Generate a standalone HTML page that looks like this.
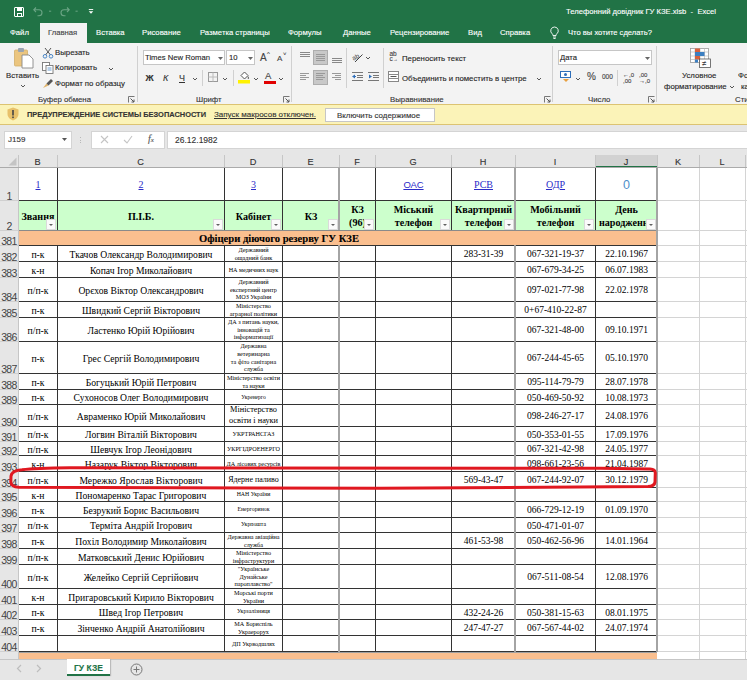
<!DOCTYPE html><html><head><meta charset="utf-8"><style>
*{margin:0;padding:0;box-sizing:border-box}
html,body{width:747px;height:680px;overflow:hidden;background:#E6E6E6;font-family:'Liberation Sans', sans-serif;}
.ab{position:absolute}
.t{position:absolute;white-space:nowrap;line-height:1;-webkit-text-stroke:0.12px currentColor}
.rib{color:#262626;font-size:7.8px}
.cell{position:absolute;font-family:'Liberation Serif', serif;color:#000;white-space:nowrap;line-height:1;text-align:center}
.hl{position:absolute;background:#333}
.gl{position:absolute;background:#D4D4D4}
.rn{position:absolute;left:0;width:18px;text-align:center;font-size:10.5px;color:#444;line-height:1;letter-spacing:-0.6px}
.ch{position:absolute;top:154px;font-size:11px;color:#333;line-height:1;text-align:center}
.fb{position:absolute;width:10px;height:11px;background:#FAFAFA;border:1px solid #DADADA}
.fb:after{content:'';position:absolute;left:2px;top:4px;border-left:2.5px solid transparent;border-right:2.5px solid transparent;border-top:2.5px solid #606060}
</style></head><body>
<div class="ab" style="left:0;top:0;width:747px;height:43px;background:#217346"></div>
<div class="ab" style="left:14px;top:7px;width:10px;height:10px;border:1.5px solid #fff;border-radius:1px"></div>
<div class="ab" style="left:16.5px;top:7px;width:5px;height:3.5px;background:#fff"></div>
<div class="ab" style="left:16.5px;top:13px;width:5px;height:3px;border:1px solid #fff;border-bottom:none"></div>
<svg class="ab" style="left:32px;top:5px" width="50" height="12" viewBox="0 0 50 12"><path d="M4 2.5 L1.8 4.8 L4 7 M1.8 4.8 H7 a3 3 0 0 1 0 6 H5.5" fill="none" stroke="#6BA585" stroke-width="1.1"/><path d="M17 6.2 h2.2" stroke="#6BA585" stroke-width="1"/><path d="M35 2.5 L37.2 4.8 L35 7 M37.2 4.8 H32 a3 3 0 0 0 0 6 H33.5" fill="none" stroke="#6BA585" stroke-width="1.1"/><path d="M43.5 6.2 h2.2" stroke="#6BA585" stroke-width="1"/></svg>
<svg class="ab" style="left:88px;top:9px" width="6" height="6" viewBox="0 0 6 6"><path d="M0.8 0.5 h4.4" stroke="#fff" stroke-width="0.9"/><path d="M0.8 2.3 L3 4.8 L5.2 2.3 Z" fill="#fff"/></svg>
<div class="t" style="left:566px;top:8px;font-size:7.65px;color:#fff">Телефонний довідник ГУ КЗЕ.xlsb&nbsp; -&nbsp; Excel</div>
<div class="ab" style="left:40px;top:23px;width:47px;height:21px;background:#F3F3F3"></div>
<div class="t" style="left:10px;top:29px;font-size:7.7px;color:#fff">Файл</div>
<div class="t" style="left:48px;top:29px;font-size:7.7px;color:#444">Главная</div>
<div class="t" style="left:96px;top:29px;font-size:7.7px;color:#fff">Вставка</div>
<div class="t" style="left:142px;top:29px;font-size:7.7px;color:#fff">Рисование</div>
<div class="t" style="left:200px;top:29px;font-size:7.7px;color:#fff">Разметка страницы</div>
<div class="t" style="left:288px;top:29px;font-size:7.7px;color:#fff">Формулы</div>
<div class="t" style="left:343px;top:29px;font-size:7.7px;color:#fff">Данные</div>
<div class="t" style="left:390px;top:29px;font-size:7.7px;color:#fff">Рецензирование</div>
<div class="t" style="left:468px;top:29px;font-size:7.7px;color:#fff">Вид</div>
<div class="t" style="left:500px;top:29px;font-size:7.7px;color:#fff">Справка</div>
<svg class="ab" style="left:549px;top:26px" width="11" height="14" viewBox="0 0 11 14"><path d="M5.5 1 a3.8 3.8 0 0 0 -2.3 6.8 c0.5 0.45 0.7 1 0.7 1.7 h3.2 c0 -0.7 0.2 -1.25 0.7 -1.7 A3.8 3.8 0 0 0 5.5 1 Z M4 11 h3 M4.4 12.5 h2.2" fill="none" stroke="#fff" stroke-width="0.9"/></svg>
<div class="t" style="left:568px;top:29px;font-size:7.6px;color:#fff">Что вы хотите сделать?</div>
<div class="ab" style="left:0;top:43px;width:747px;height:61px;background:#F3F3F3"></div>
<svg class="ab" style="left:13px;top:47px" width="22" height="22" viewBox="0 0 22 22"><rect x="1.5" y="3" width="13" height="16" rx="1" fill="#EBC57F" stroke="#D2AE6A" stroke-width="0.8"/><rect x="5" y="1" width="6" height="4" rx="1" fill="#9AA4B0"/><path d="M9 8 h7 l4 4 v9 h-11 z" fill="#fff" stroke="#888" stroke-width="0.9"/></svg>
<div class="t rib" style="left:6px;top:72px">Вставить</div>
<svg class="ab" style="left:20px;top:83.5px" width="6" height="4" viewBox="0 0 6 4"><path d="M1 1 L3 3 L5 1" fill="none" stroke="#555" stroke-width="1"/></svg>
<svg class="ab" style="left:42px;top:47px" width="12" height="12" viewBox="0 0 12 12"><path d="M3 1 L8.5 8 M9 1 L3.5 8" stroke="#555" stroke-width="1"/><circle cx="3" cy="9.3" r="1.8" fill="none" stroke="#4A86C5" stroke-width="1"/><circle cx="9" cy="9.3" r="1.8" fill="none" stroke="#4A86C5" stroke-width="1"/></svg>
<div class="t rib" style="left:55px;top:49px">Вырезать</div>
<svg class="ab" style="left:42px;top:62px" width="12" height="12" viewBox="0 0 12 12"><rect x="0.5" y="0.5" width="7" height="8" fill="#fff" stroke="#777" stroke-width="0.9"/><rect x="4" y="3.5" width="7" height="8" fill="#fff" stroke="#777" stroke-width="0.9"/><path d="M5.5 6 h4 M5.5 8 h4" stroke="#4A86C5" stroke-width="0.8"/></svg>
<div class="t rib" style="left:55px;top:64px">Копировать</div>
<svg class="ab" style="left:108px;top:67px" width="6" height="4" viewBox="0 0 6 4"><path d="M1 1 L3 3 L5 1" fill="none" stroke="#555" stroke-width="1"/></svg>
<svg class="ab" style="left:42px;top:76.5px" width="12" height="12" viewBox="0 0 12 12"><path d="M1 11 L4.5 6.5 L6.5 8.5 Z" fill="#E0B36A"/><path d="M4.5 6.5 L9 2 L11 4 L6.5 8.5 Z" fill="#555"/></svg>
<div class="t rib" style="left:55px;top:80px">Формат по образцу</div>
<div class="t rib" style="left:38px;top:95.5px;color:#333">Буфер обмена</div>
<svg class="ab" style="left:128px;top:96px" width="7" height="7" viewBox="0 0 7 7"><path d="M0.5 6.5 V0.5 H6.5" fill="none" stroke="#777" stroke-width="1"/><path d="M2.5 2.5 L6 6 M6 3.5 V6 H3.5" fill="none" stroke="#555" stroke-width="1"/></svg>
<div class="ab" style="left:137px;top:46px;width:1px;height:56px;background:#D0D0D0"></div>
<div class="ab" style="left:143px;top:50px;width:82px;height:15px;background:#fff;border:1px solid #C6C6C6"></div>
<div class="t rib" style="left:145px;top:53.5px;font-size:7.7px">Times New Roman</div>
<svg class="ab" style="left:218px;top:57px" width="5" height="3"><path d="M0 0 h5 l-2.5 3z" fill="#666"/></svg>
<div class="ab" style="left:226px;top:50px;width:29px;height:15px;background:#fff;border:1px solid #C6C6C6"></div>
<div class="t rib" style="left:229px;top:53.5px;font-size:7.7px">10</div>
<svg class="ab" style="left:248px;top:57px" width="5" height="3"><path d="M0 0 h5 l-2.5 3z" fill="#666"/></svg>
<div class="t" style="left:260px;top:53px;font-size:10px;color:#444">A</div><div class="t" style="left:267px;top:51px;font-size:6px;color:#444">^</div>
<div class="t" style="left:277px;top:55px;font-size:8px;color:#444">A</div><div class="t" style="left:283px;top:51px;font-size:6px;color:#444">˅</div>
<div class="t" style="left:145.5px;top:74px;font-size:9px;font-weight:bold;color:#333">Ж</div>
<div class="t" style="left:163px;top:74px;font-size:9px;font-style:italic;color:#333">К</div>
<div class="t" style="left:179px;top:74px;font-size:9px;color:#333;text-decoration:underline">Ч</div>
<svg class="ab" style="left:192px;top:77px" width="6" height="4" viewBox="0 0 6 4"><path d="M1 1 L3 3 L5 1" fill="none" stroke="#555" stroke-width="1"/></svg>
<div class="ab" style="left:202px;top:70px;width:1px;height:16px;background:#D0D0D0"></div>
<svg class="ab" style="left:208px;top:72px" width="10" height="10" viewBox="0 0 10 10"><rect x="0.5" y="0.5" width="9" height="9" fill="none" stroke="#999" stroke-width="1"/><path d="M5 0.5 V9.5 M0.5 5 H9.5" stroke="#BBB" stroke-width="1"/></svg>
<svg class="ab" style="left:222px;top:77px" width="6" height="4" viewBox="0 0 6 4"><path d="M1 1 L3 3 L5 1" fill="none" stroke="#555" stroke-width="1"/></svg>
<div class="ab" style="left:233px;top:70px;width:1px;height:16px;background:#D0D0D0"></div>
<svg class="ab" style="left:238px;top:70px" width="12" height="14" viewBox="0 0 12 14"><path d="M3 5.5 L6.5 2 L10 5.5 L6.5 9 Z" fill="#fff" stroke="#555" stroke-width="1"/><path d="M10 6.5 q1 2 0 2.5" fill="none" stroke="#555"/><rect x="0" y="10" width="12" height="3.5" fill="#FFF200"/></svg>
<svg class="ab" style="left:253px;top:77px" width="6" height="4" viewBox="0 0 6 4"><path d="M1 1 L3 3 L5 1" fill="none" stroke="#555" stroke-width="1"/></svg>
<div class="t" style="left:265px;top:71px;font-size:9.5px;color:#444">A</div>
<div class="ab" style="left:263.5px;top:80.5px;width:12px;height:3px;background:#E00000"></div>
<svg class="ab" style="left:278px;top:77px" width="6" height="4" viewBox="0 0 6 4"><path d="M1 1 L3 3 L5 1" fill="none" stroke="#555" stroke-width="1"/></svg>
<div class="t rib" style="left:196px;top:95.5px;color:#333">Шрифт</div>
<svg class="ab" style="left:283px;top:96px" width="7" height="7" viewBox="0 0 7 7"><path d="M0.5 6.5 V0.5 H6.5" fill="none" stroke="#777" stroke-width="1"/><path d="M2.5 2.5 L6 6 M6 3.5 V6 H3.5" fill="none" stroke="#555" stroke-width="1"/></svg>
<div class="ab" style="left:291px;top:46px;width:1px;height:56px;background:#D0D0D0"></div>
<div class="ab" style="left:300px;top:52px;width:10px;height:1px;background:#888"></div><div class="ab" style="left:300px;top:54px;width:10px;height:1px;background:#888"></div><div class="ab" style="left:300px;top:56px;width:10px;height:1px;background:#888"></div>
<div class="ab" style="left:313px;top:50px;width:15px;height:15px;background:#C8C8C8;border:1px solid #ADADAD"></div>
<div class="ab" style="left:316px;top:54px;width:9px;height:1px;background:#999"></div><div class="ab" style="left:316px;top:56px;width:9px;height:1px;background:#999"></div><div class="ab" style="left:316px;top:58px;width:9px;height:1px;background:#999"></div><div class="ab" style="left:316px;top:60px;width:9px;height:1px;background:#999"></div>
<div class="ab" style="left:332px;top:58px;width:10px;height:1px;background:#888"></div><div class="ab" style="left:332px;top:60px;width:10px;height:1px;background:#888"></div><div class="ab" style="left:332px;top:62px;width:10px;height:1px;background:#888"></div>
<div class="ab" style="left:300px;top:73px;width:9px;height:1px;background:#999"></div><div class="ab" style="left:300px;top:75px;width:6px;height:1px;background:#999"></div><div class="ab" style="left:300px;top:77px;width:9px;height:1px;background:#999"></div><div class="ab" style="left:300px;top:79px;width:6px;height:1px;background:#999"></div>
<div class="ab" style="left:313px;top:70px;width:15px;height:15px;background:#C8C8C8;border:1px solid #ADADAD"></div>
<div class="ab" style="left:316px;top:73px;width:9px;height:1px;background:#999"></div><div class="ab" style="left:316px;top:75px;width:7px;height:1px;background:#999"></div><div class="ab" style="left:316px;top:77px;width:9px;height:1px;background:#999"></div><div class="ab" style="left:316px;top:79px;width:7px;height:1px;background:#999"></div>
<div class="ab" style="left:332px;top:73px;width:9px;height:1px;background:#999"></div><div class="ab" style="left:335px;top:75px;width:6px;height:1px;background:#999"></div><div class="ab" style="left:332px;top:77px;width:9px;height:1px;background:#999"></div><div class="ab" style="left:335px;top:79px;width:6px;height:1px;background:#999"></div>
<div class="ab" style="left:346px;top:48px;width:1px;height:40px;background:#D0D0D0"></div>
<svg class="ab" style="left:352px;top:51px" width="12" height="12" viewBox="0 0 12 12"><text x="0" y="8" font-size="6.5" fill="#444" font-family="Liberation Sans" transform="rotate(-30 4 6)">ab</text><path d="M3 11 L10.5 3.5" stroke="#444" stroke-width="1"/></svg>
<svg class="ab" style="left:365px;top:56px" width="6" height="4" viewBox="0 0 6 4"><path d="M1 1 L3 3 L5 1" fill="none" stroke="#555" stroke-width="1"/></svg>
<svg class="ab" style="left:352px;top:72px" width="11" height="10" viewBox="0 0 11 10"><path d="M0 0.5h11 M5 3.5h6 M5 5.5h6 M0 8.5h11" stroke="#777" stroke-width="1"/><path d="M0 4.5 L3 2.5 V6.5Z" fill="#2F6FBA"/><path d="M1 4.5h3" stroke="#2F6FBA"/></svg>
<svg class="ab" style="left:368px;top:72px" width="11" height="10" viewBox="0 0 11 10"><path d="M0 0.5h11 M5 3.5h6 M5 5.5h6 M0 8.5h11" stroke="#777" stroke-width="1"/><path d="M4 4.5 L1 2.5 V6.5Z" fill="#2F6FBA"/></svg>
<div class="ab" style="left:383px;top:48px;width:1px;height:40px;background:#D0D0D0"></div>
<div class="t" style="left:389.5px;top:52px;font-size:6.5px;color:#444;line-height:0.75">ab<br>c<span style="font-size:5px">→</span></div>
<div class="t rib" style="left:402px;top:54.5px">Переносить текст</div>
<svg class="ab" style="left:388px;top:71px" width="11" height="11" viewBox="0 0 11 11"><rect x="0.5" y="0.5" width="10" height="10" fill="#fff" stroke="#888"/><path d="M0.5 3.5h10 M0.5 7.5h10" stroke="#888"/><path d="M2.5 5.5h6" stroke="#555"/></svg>
<div class="t rib" style="left:402px;top:74.5px">Объединить и поместить в центре</div>
<svg class="ab" style="left:536px;top:77px" width="6" height="4" viewBox="0 0 6 4"><path d="M1 1 L3 3 L5 1" fill="none" stroke="#555" stroke-width="1"/></svg>
<div class="t rib" style="left:390px;top:95.5px;color:#333">Выравнивание</div>
<svg class="ab" style="left:544px;top:96px" width="7" height="7" viewBox="0 0 7 7"><path d="M0.5 6.5 V0.5 H6.5" fill="none" stroke="#777" stroke-width="1"/><path d="M2.5 2.5 L6 6 M6 3.5 V6 H3.5" fill="none" stroke="#555" stroke-width="1"/></svg>
<div class="ab" style="left:552px;top:46px;width:1px;height:56px;background:#D0D0D0"></div>
<div class="ab" style="left:558px;top:50px;width:94px;height:15px;background:#fff;border:1px solid #C6C6C6"></div>
<div class="t rib" style="left:560px;top:53.5px;font-size:7.7px">Дата</div>
<svg class="ab" style="left:645px;top:57px" width="5" height="3"><path d="M0 0 h5 l-2.5 3z" fill="#666"/></svg>
<svg class="ab" style="left:560px;top:71px" width="12" height="12" viewBox="0 0 12 12"><rect x="0.5" y="0.5" width="10" height="6" fill="#fff" stroke="#2F6FBA"/><circle cx="5.5" cy="3.5" r="1.5" fill="#2F6FBA"/><path d="M3 8 l3 3 l3 -3" fill="#E8A040"/></svg>
<svg class="ab" style="left:575px;top:77px" width="6" height="4" viewBox="0 0 6 4"><path d="M1 1 L3 3 L5 1" fill="none" stroke="#555" stroke-width="1"/></svg>
<div class="t" style="left:587px;top:72px;font-size:10px;color:#444">%</div>
<div class="t" style="left:602px;top:74px;font-size:6.5px;color:#444">000</div>
<div class="ab" style="left:617px;top:70px;width:1px;height:16px;background:#D0D0D0"></div>
<div class="t" style="left:623px;top:71.5px;font-size:6px;color:#444;line-height:1">←,0<br>,00</div>
<div class="t" style="left:639px;top:71.5px;font-size:6px;color:#444;line-height:1">,00<br>→,0</div>
<div class="t rib" style="left:588px;top:95.5px;color:#333">Число</div>
<svg class="ab" style="left:648px;top:96px" width="7" height="7" viewBox="0 0 7 7"><path d="M0.5 6.5 V0.5 H6.5" fill="none" stroke="#777" stroke-width="1"/><path d="M2.5 2.5 L6 6 M6 3.5 V6 H3.5" fill="none" stroke="#555" stroke-width="1"/></svg>
<div class="ab" style="left:656px;top:46px;width:1px;height:56px;background:#D0D0D0"></div>
<svg class="ab" style="left:690px;top:48px" width="21" height="20" viewBox="0 0 21 20"><rect x="0.5" y="0.5" width="18" height="14" fill="#fff" stroke="#999" stroke-width="0.8"/><path d="M0.5 4h18 M0.5 8h18 M0.5 11.5h18 M5 0.5v14 M10 0.5v14 M14.5 0.5v14" stroke="#BBB" stroke-width="0.7"/><rect x="5" y="0.5" width="5" height="3.5" fill="#D8613C"/><rect x="5" y="4" width="9.5" height="4" fill="#3C7FC1"/><rect x="5" y="8" width="5" height="3.5" fill="#D8613C"/><rect x="5" y="11.5" width="3" height="3" fill="#3C7FC1"/><rect x="9.5" y="11" width="11" height="8.5" fill="#fff" stroke="#555" stroke-width="0.8"/><text x="12" y="18" font-size="8" fill="#333" font-family="Liberation Sans">≠</text></svg>
<div class="t rib" style="left:682px;top:72px">Условное</div>
<div class="t rib" style="left:664px;top:83px">форматирование</div>
<svg class="ab" style="left:729px;top:85px" width="6" height="4" viewBox="0 0 6 4"><path d="M1 1 L3 3 L5 1" fill="none" stroke="#555" stroke-width="1"/></svg>
<div class="t rib" style="left:738px;top:72px">Фо</div>
<div class="t rib" style="left:741px;top:83px">ка</div>
<div class="t rib" style="left:735px;top:95.5px;color:#333">Сти</div>
<div class="ab" style="left:0;top:104px;width:747px;height:21px;background:#FBF3B8;border-top:1px solid #DCC372;border-bottom:1px solid #DCC372"></div>
<svg class="ab" style="left:7px;top:107px" width="12" height="14" viewBox="0 0 12 14"><path d="M6 0.5 L11.5 2.5 V7 C11.5 10.5 8.5 12.5 6 13.5 C3.5 12.5 0.5 10.5 0.5 7 V2.5 Z" fill="#E8C16A"/><rect x="5.2" y="3" width="1.6" height="5.5" fill="#444"/><rect x="5.2" y="9.5" width="1.6" height="1.6" fill="#444"/></svg>
<div class="t" style="left:27px;top:111px;font-size:7.45px;font-weight:bold;color:#333">ПРЕДУПРЕЖДЕНИЕ СИСТЕМЫ БЕЗОПАСНОСТИ</div>
<div class="t" style="left:214px;top:111px;font-size:8px;color:#333;text-decoration:underline">Запуск макросов отключен.</div>
<div class="ab" style="left:325px;top:108px;width:110px;height:14px;background:#fff;border:1px solid #C6C6C6"></div>
<div class="t" style="left:337px;top:111.5px;font-size:7.9px;color:#333">Включить содержимое</div>
<div class="ab" style="left:0;top:125px;width:747px;height:43px;background:#E6E6E6"></div>
<div class="ab" style="left:4px;top:131px;width:68px;height:18px;background:#fff;border:1px solid #D4D4D4"></div>
<div class="t" style="left:8px;top:136px;font-size:8px;color:#333">J159</div>
<svg class="ab" style="left:62px;top:138px" width="5" height="3"><path d="M0 0 h5 l-2.5 3z" fill="#555"/></svg>
<div class="ab" style="left:80px;top:137px;width:1.2px;height:1.2px;background:#B8B8B8"></div><div class="ab" style="left:80px;top:139.5px;width:1.2px;height:1.2px;background:#B8B8B8"></div><div class="ab" style="left:80px;top:142px;width:1.2px;height:1.2px;background:#B8B8B8"></div>
<div class="ab" style="left:91px;top:131px;width:74px;height:18px;background:#fff;border:1px solid #D4D4D4"></div>
<svg class="ab" style="left:100px;top:135px" width="9" height="9" viewBox="0 0 9 9"><path d="M1 1 L8 8 M8 1 L1 8" stroke="#C4C4C4" stroke-width="1.1"/></svg>
<svg class="ab" style="left:123px;top:135px" width="10" height="9" viewBox="0 0 10 9"><path d="M1 5 L4 8 L9 1" fill="none" stroke="#C4C4C4" stroke-width="1.1"/></svg>
<div class="t" style="left:148px;top:133.5px;font-size:10px;font-style:italic;color:#555;font-family:'Liberation Serif'">f<span style="font-size:7px">x</span></div>
<div class="ab" style="left:167px;top:131px;width:580px;height:18px;background:#fff;border:1px solid #D4D4D4;border-right:none"></div>
<div class="t" style="left:175px;top:136px;font-size:8.5px;color:#333">26.12.1982</div>
<div class="ab" style="left:0;top:149px;width:747px;height:1px;background:#DADADA"></div>
<div class="ab" style="left:0;top:149px;width:747px;height:18px;background:#E6E6E6"></div>
<div class="ab" style="left:595px;top:155px;width:62px;height:12px;background:#D2D2D2"></div>
<div class="ab" style="left:595px;top:166px;width:62px;height:2px;background:#217346"></div>
<div class="ab" style="left:0;top:167px;width:747px;height:1px;background:#ABABAB"></div>
<svg class="ab" style="left:8px;top:157px" width="9" height="9"><path d="M8.5 0.5 V8.5 H0.5 Z" fill="#C4C4C4"/></svg>
<div class="t" style="left:18px;width:39px;top:157.5px;font-size:9.2px;text-align:center;color:#333">B</div>
<div class="ab" style="left:57px;top:155px;width:1px;height:12px;background:#C6C6C6"></div>
<div class="t" style="left:57px;width:167px;top:157.5px;font-size:9.2px;text-align:center;color:#333">C</div>
<div class="ab" style="left:224px;top:155px;width:1px;height:12px;background:#C6C6C6"></div>
<div class="t" style="left:224px;width:58px;top:157.5px;font-size:9.2px;text-align:center;color:#333">D</div>
<div class="ab" style="left:282px;top:155px;width:1px;height:12px;background:#C6C6C6"></div>
<div class="t" style="left:282px;width:57px;top:157.5px;font-size:9.2px;text-align:center;color:#333">E</div>
<div class="ab" style="left:339px;top:155px;width:1px;height:12px;background:#C6C6C6"></div>
<div class="t" style="left:339px;width:36px;top:157.5px;font-size:9.2px;text-align:center;color:#333">F</div>
<div class="ab" style="left:375px;top:155px;width:1px;height:12px;background:#C6C6C6"></div>
<div class="t" style="left:375px;width:76px;top:157.5px;font-size:9.2px;text-align:center;color:#333">G</div>
<div class="ab" style="left:451px;top:155px;width:1px;height:12px;background:#C6C6C6"></div>
<div class="t" style="left:451px;width:64px;top:157.5px;font-size:9.2px;text-align:center;color:#333">H</div>
<div class="ab" style="left:515px;top:155px;width:1px;height:12px;background:#C6C6C6"></div>
<div class="t" style="left:515px;width:80px;top:157.5px;font-size:9.2px;text-align:center;color:#333">I</div>
<div class="ab" style="left:595px;top:155px;width:1px;height:12px;background:#C6C6C6"></div>
<div class="t" style="left:595px;width:62px;top:157.5px;font-size:9.2px;text-align:center;color:#333">J</div>
<div class="ab" style="left:657px;top:155px;width:1px;height:12px;background:#C6C6C6"></div>
<div class="t" style="left:657px;width:42px;top:157.5px;font-size:9.2px;text-align:center;color:#333">K</div>
<div class="ab" style="left:699px;top:155px;width:1px;height:12px;background:#C6C6C6"></div>
<div class="t" style="left:699px;width:46px;top:157.5px;font-size:9.2px;text-align:center;color:#333">L</div>
<div class="ab" style="left:745px;top:155px;width:1px;height:12px;background:#C6C6C6"></div>
<div class="ab" style="left:18px;top:155px;width:1px;height:12px;background:#C6C6C6"></div>
<div class="ab" style="left:0;top:168px;width:18px;height:491px;background:#E6E6E6"></div>
<div class="ab" style="left:18px;top:168px;width:1px;height:491px;background:#C6C6C6"></div>
<div class="ab" style="left:19px;top:168px;width:728px;height:491px;background:#fff"></div>
<div class="ab" style="left:19px;top:201px;width:638px;height:30px;background:#CCFFCC"></div>
<div class="ab" style="left:19px;top:231px;width:638px;height:15px;background:#FABF8F"></div>
<div class="ab" style="left:19px;top:652px;width:638px;height:7px;background:#FABF8F"></div>
<div class="gl" style="left:657px;top:200px;width:90px;height:1px"></div>
<div class="gl" style="left:0px;top:200px;width:18px;height:1px;background:#D0D0D0"></div>
<div class="gl" style="left:657px;top:230px;width:90px;height:1px"></div>
<div class="gl" style="left:0px;top:230px;width:18px;height:1px;background:#D0D0D0"></div>
<div class="gl" style="left:657px;top:245px;width:90px;height:1px"></div>
<div class="gl" style="left:0px;top:245px;width:18px;height:1px;background:#D0D0D0"></div>
<div class="gl" style="left:657px;top:261px;width:90px;height:1px"></div>
<div class="gl" style="left:0px;top:261px;width:18px;height:1px;background:#D0D0D0"></div>
<div class="gl" style="left:657px;top:277px;width:90px;height:1px"></div>
<div class="gl" style="left:0px;top:277px;width:18px;height:1px;background:#D0D0D0"></div>
<div class="gl" style="left:657px;top:301px;width:90px;height:1px"></div>
<div class="gl" style="left:0px;top:301px;width:18px;height:1px;background:#D0D0D0"></div>
<div class="gl" style="left:657px;top:317px;width:90px;height:1px"></div>
<div class="gl" style="left:0px;top:317px;width:18px;height:1px;background:#D0D0D0"></div>
<div class="gl" style="left:657px;top:341px;width:90px;height:1px"></div>
<div class="gl" style="left:0px;top:341px;width:18px;height:1px;background:#D0D0D0"></div>
<div class="gl" style="left:657px;top:373px;width:90px;height:1px"></div>
<div class="gl" style="left:0px;top:373px;width:18px;height:1px;background:#D0D0D0"></div>
<div class="gl" style="left:657px;top:389px;width:90px;height:1px"></div>
<div class="gl" style="left:0px;top:389px;width:18px;height:1px;background:#D0D0D0"></div>
<div class="gl" style="left:657px;top:404px;width:90px;height:1px"></div>
<div class="gl" style="left:0px;top:404px;width:18px;height:1px;background:#D0D0D0"></div>
<div class="gl" style="left:657px;top:426px;width:90px;height:1px"></div>
<div class="gl" style="left:0px;top:426px;width:18px;height:1px;background:#D0D0D0"></div>
<div class="gl" style="left:657px;top:441px;width:90px;height:1px"></div>
<div class="gl" style="left:0px;top:441px;width:18px;height:1px;background:#D0D0D0"></div>
<div class="gl" style="left:657px;top:455px;width:90px;height:1px"></div>
<div class="gl" style="left:0px;top:455px;width:18px;height:1px;background:#D0D0D0"></div>
<div class="gl" style="left:657px;top:471px;width:90px;height:1px"></div>
<div class="gl" style="left:0px;top:471px;width:18px;height:1px;background:#D0D0D0"></div>
<div class="gl" style="left:657px;top:487px;width:90px;height:1px"></div>
<div class="gl" style="left:0px;top:487px;width:18px;height:1px;background:#D0D0D0"></div>
<div class="gl" style="left:657px;top:501px;width:90px;height:1px"></div>
<div class="gl" style="left:0px;top:501px;width:18px;height:1px;background:#D0D0D0"></div>
<div class="gl" style="left:657px;top:517px;width:90px;height:1px"></div>
<div class="gl" style="left:0px;top:517px;width:18px;height:1px;background:#D0D0D0"></div>
<div class="gl" style="left:657px;top:532px;width:90px;height:1px"></div>
<div class="gl" style="left:0px;top:532px;width:18px;height:1px;background:#D0D0D0"></div>
<div class="gl" style="left:657px;top:548px;width:90px;height:1px"></div>
<div class="gl" style="left:0px;top:548px;width:18px;height:1px;background:#D0D0D0"></div>
<div class="gl" style="left:657px;top:564px;width:90px;height:1px"></div>
<div class="gl" style="left:0px;top:564px;width:18px;height:1px;background:#D0D0D0"></div>
<div class="gl" style="left:657px;top:588px;width:90px;height:1px"></div>
<div class="gl" style="left:0px;top:588px;width:18px;height:1px;background:#D0D0D0"></div>
<div class="gl" style="left:657px;top:604px;width:90px;height:1px"></div>
<div class="gl" style="left:0px;top:604px;width:18px;height:1px;background:#D0D0D0"></div>
<div class="gl" style="left:657px;top:619px;width:90px;height:1px"></div>
<div class="gl" style="left:0px;top:619px;width:18px;height:1px;background:#D0D0D0"></div>
<div class="gl" style="left:657px;top:635px;width:90px;height:1px"></div>
<div class="gl" style="left:0px;top:635px;width:18px;height:1px;background:#D0D0D0"></div>
<div class="gl" style="left:657px;top:651px;width:90px;height:1px"></div>
<div class="gl" style="left:0px;top:651px;width:18px;height:1px;background:#D0D0D0"></div>
<div class="gl" style="left:699px;top:168px;width:1px;height:491px"></div>
<div class="gl" style="left:745px;top:168px;width:1px;height:491px"></div>
<div class="hl" style="left:19px;top:200px;width:638px;height:1px"></div>
<div class="hl" style="left:19px;top:230px;width:638px;height:1px;background:#8A8A8A"></div>
<div class="hl" style="left:19px;top:245px;width:638px;height:1px"></div>
<div class="hl" style="left:19px;top:261px;width:638px;height:1px"></div>
<div class="hl" style="left:19px;top:277px;width:638px;height:1px"></div>
<div class="hl" style="left:19px;top:301px;width:638px;height:1px"></div>
<div class="hl" style="left:19px;top:317px;width:638px;height:1px"></div>
<div class="hl" style="left:19px;top:341px;width:638px;height:1px"></div>
<div class="hl" style="left:19px;top:373px;width:638px;height:1px"></div>
<div class="hl" style="left:19px;top:389px;width:638px;height:1px"></div>
<div class="hl" style="left:19px;top:404px;width:638px;height:1px"></div>
<div class="hl" style="left:19px;top:426px;width:638px;height:1px"></div>
<div class="hl" style="left:19px;top:441px;width:638px;height:1px"></div>
<div class="hl" style="left:19px;top:455px;width:638px;height:1px"></div>
<div class="hl" style="left:19px;top:471px;width:638px;height:1px"></div>
<div class="hl" style="left:19px;top:487px;width:638px;height:1px"></div>
<div class="hl" style="left:19px;top:501px;width:638px;height:1px"></div>
<div class="hl" style="left:19px;top:517px;width:638px;height:1px"></div>
<div class="hl" style="left:19px;top:532px;width:638px;height:1px"></div>
<div class="hl" style="left:19px;top:548px;width:638px;height:1px"></div>
<div class="hl" style="left:19px;top:564px;width:638px;height:1px"></div>
<div class="hl" style="left:19px;top:588px;width:638px;height:1px"></div>
<div class="hl" style="left:19px;top:604px;width:638px;height:1px"></div>
<div class="hl" style="left:19px;top:619px;width:638px;height:1px"></div>
<div class="hl" style="left:19px;top:635px;width:638px;height:1px"></div>
<div class="hl" style="left:19px;top:651px;width:638px;height:1px"></div>
<div class="hl" style="left:19px;top:652px;width:638px;height:1px;background:#A0A0A0"></div>
<div class="hl" style="left:57px;top:168px;width:1px;height:62px"></div>
<div class="hl" style="left:57px;top:245px;width:1px;height:407px"></div>
<div class="hl" style="left:224px;top:168px;width:1px;height:62px"></div>
<div class="hl" style="left:224px;top:245px;width:1px;height:407px"></div>
<div class="hl" style="left:282px;top:168px;width:1px;height:62px"></div>
<div class="hl" style="left:282px;top:245px;width:1px;height:407px"></div>
<div class="hl" style="left:338px;top:168px;width:2px;height:62px;background:#A4A4A4"></div>
<div class="hl" style="left:338px;top:245px;width:2px;height:407px;background:#A4A4A4"></div>
<div class="hl" style="left:375px;top:168px;width:1px;height:62px"></div>
<div class="hl" style="left:375px;top:245px;width:1px;height:407px"></div>
<div class="hl" style="left:451px;top:168px;width:1px;height:62px"></div>
<div class="hl" style="left:451px;top:245px;width:1px;height:407px"></div>
<div class="hl" style="left:514px;top:168px;width:2px;height:62px;background:#A4A4A4"></div>
<div class="hl" style="left:514px;top:245px;width:2px;height:407px;background:#A4A4A4"></div>
<div class="hl" style="left:595px;top:168px;width:1px;height:62px"></div>
<div class="hl" style="left:595px;top:245px;width:1px;height:407px"></div>
<div class="hl" style="left:656px;top:168px;width:2px;height:62px;background:#A4A4A4"></div>
<div class="hl" style="left:656px;top:245px;width:2px;height:407px;background:#A4A4A4"></div>
<div class="hl" style="left:656px;top:230px;width:2px;height:16px;background:#A4A4A4"></div>
<div class="rn" style="top:190.5px">1</div>
<div class="rn" style="top:220.5px">2</div>
<div class="rn" style="top:235.5px">381</div>
<div class="rn" style="top:251.5px">382</div>
<div class="rn" style="top:267.5px">383</div>
<div class="rn" style="top:291.5px">384</div>
<div class="rn" style="top:307.5px">385</div>
<div class="rn" style="top:331.5px">386</div>
<div class="rn" style="top:363.5px">387</div>
<div class="rn" style="top:379.5px">388</div>
<div class="rn" style="top:394.5px">389</div>
<div class="rn" style="top:416.5px">390</div>
<div class="rn" style="top:431.5px">391</div>
<div class="rn" style="top:445.5px">392</div>
<div class="rn" style="top:461.5px">393</div>
<div class="rn" style="top:477.5px">394</div>
<div class="rn" style="top:491.5px">395</div>
<div class="rn" style="top:507.5px">396</div>
<div class="rn" style="top:522.5px">397</div>
<div class="rn" style="top:538.5px">398</div>
<div class="rn" style="top:554.5px">399</div>
<div class="rn" style="top:578.5px">400</div>
<div class="rn" style="top:594.5px">401</div>
<div class="rn" style="top:609.5px">402</div>
<div class="rn" style="top:625.5px">403</div>
<div class="rn" style="top:641.5px">404</div>
<div class="ab" style="left:19px;top:168px;width:38px;height:32px;display:flex;align-items:center;justify-content:center;text-align:center;font-family:'Liberation Serif', serif;font-size:10px;line-height:10.0px;color:#2B2BC8;font-weight:normal;overflow:hidden;white-space:nowrap"><div style="position:relative;top:1px;text-decoration:underline">1</div></div>
<div class="ab" style="left:58px;top:168px;width:166px;height:32px;display:flex;align-items:center;justify-content:center;text-align:center;font-family:'Liberation Serif', serif;font-size:10px;line-height:10.0px;color:#2B2BC8;font-weight:normal;overflow:hidden;white-space:nowrap"><div style="position:relative;top:1px;text-decoration:underline">2</div></div>
<div class="ab" style="left:225px;top:168px;width:57px;height:32px;display:flex;align-items:center;justify-content:center;text-align:center;font-family:'Liberation Serif', serif;font-size:10px;line-height:10.0px;color:#2B2BC8;font-weight:normal;overflow:hidden;white-space:nowrap"><div style="position:relative;top:1px;text-decoration:underline">3</div></div>
<div class="ab" style="left:376px;top:168px;width:75px;height:32px;display:flex;align-items:center;justify-content:center;text-align:center;font-family:'Liberation Sans', sans-serif;font-size:9.5px;line-height:9.5px;color:#2B2BC8;font-weight:normal;overflow:hidden;white-space:nowrap"><div style="position:relative;top:1px;text-decoration:underline">ОАС</div></div>
<div class="ab" style="left:452px;top:168px;width:63px;height:32px;display:flex;align-items:center;justify-content:center;text-align:center;font-family:'Liberation Serif', serif;font-size:10px;line-height:10.0px;color:#2B2BC8;font-weight:normal;overflow:hidden;white-space:nowrap"><div style="position:relative;top:1px;text-decoration:underline">РСВ</div></div>
<div class="ab" style="left:516px;top:168px;width:79px;height:32px;display:flex;align-items:center;justify-content:center;text-align:center;font-family:'Liberation Serif', serif;font-size:10px;line-height:10.0px;color:#2B2BC8;font-weight:normal;overflow:hidden;white-space:nowrap"><div style="position:relative;top:1px;text-decoration:underline">ОДР</div></div>
<div class="ab" style="left:596px;top:168px;width:61px;height:32px;display:flex;align-items:center;justify-content:center;text-align:center;font-family:'Liberation Sans', sans-serif;font-size:12.5px;line-height:12.5px;color:#4F8FCB;font-weight:normal;overflow:hidden;white-space:nowrap"><div style="position:relative;top:1px;">0</div></div>
<div class="ab" style="left:19px;top:201px;width:38px;height:29px;display:flex;align-items:center;justify-content:center;text-align:center;font-family:'Liberation Serif', serif;font-size:10.1px;line-height:12.7px;color:#000;font-weight:bold;overflow:hidden;white-space:nowrap"><div style="position:relative;top:1.5px;">Звання</div></div>
<div class="ab" style="left:58px;top:201px;width:166px;height:29px;display:flex;align-items:center;justify-content:center;text-align:center;font-family:'Liberation Serif', serif;font-size:10.1px;line-height:12.7px;color:#000;font-weight:bold;overflow:hidden;white-space:nowrap"><div style="position:relative;top:1.5px;">П.І.Б.</div></div>
<div class="ab" style="left:225px;top:201px;width:57px;height:29px;display:flex;align-items:center;justify-content:center;text-align:center;font-family:'Liberation Serif', serif;font-size:10.1px;line-height:12.7px;color:#000;font-weight:bold;overflow:hidden;white-space:nowrap"><div style="position:relative;top:1.5px;">Кабінет</div></div>
<div class="ab" style="left:283px;top:201px;width:56px;height:29px;display:flex;align-items:center;justify-content:center;text-align:center;font-family:'Liberation Serif', serif;font-size:10.1px;line-height:12.7px;color:#000;font-weight:bold;overflow:hidden;white-space:nowrap"><div style="position:relative;top:1.5px;">КЗ</div></div>
<div class="ab" style="left:340px;top:201px;width:35px;height:29px;display:flex;align-items:center;justify-content:center;text-align:center;font-family:'Liberation Serif', serif;font-size:10.1px;line-height:12.7px;color:#000;font-weight:bold;overflow:hidden;white-space:nowrap"><div style="position:relative;top:1.5px;">КЗ<br>(96)</div></div>
<div class="ab" style="left:376px;top:201px;width:75px;height:29px;display:flex;align-items:center;justify-content:center;text-align:center;font-family:'Liberation Serif', serif;font-size:10.1px;line-height:12.7px;color:#000;font-weight:bold;overflow:hidden;white-space:nowrap"><div style="position:relative;top:1.5px;">Міський<br>телефон</div></div>
<div class="ab" style="left:452px;top:201px;width:63px;height:29px;display:flex;align-items:center;justify-content:center;text-align:center;font-family:'Liberation Serif', serif;font-size:10.1px;line-height:12.7px;color:#000;font-weight:bold;overflow:hidden;white-space:nowrap"><div style="position:relative;top:1.5px;">Квартирний<br>телефон</div></div>
<div class="ab" style="left:516px;top:201px;width:79px;height:29px;display:flex;align-items:center;justify-content:center;text-align:center;font-family:'Liberation Serif', serif;font-size:10.1px;line-height:12.7px;color:#000;font-weight:bold;overflow:hidden;white-space:nowrap"><div style="position:relative;top:1.5px;">Мобільний<br>телефон</div></div>
<div class="ab" style="left:596px;top:201px;width:61px;height:29px;display:flex;align-items:center;justify-content:center;text-align:center;font-family:'Liberation Serif', serif;font-size:10.1px;line-height:12.7px;color:#000;font-weight:bold;overflow:hidden;white-space:nowrap"><div style="position:relative;top:1.5px;">День<br>народження</div></div>
<div class="fb" style="left:46px;top:219px"></div>
<div class="fb" style="left:213px;top:219px"></div>
<div class="fb" style="left:271px;top:219px"></div>
<div class="fb" style="left:328px;top:219px"></div>
<div class="fb" style="left:364px;top:219px"></div>
<div class="fb" style="left:440px;top:219px"></div>
<div class="fb" style="left:504px;top:219px"></div>
<div class="fb" style="left:584px;top:219px"></div>
<div class="fb" style="left:646px;top:219px"></div>
<div class="t" style="left:179px;width:200px;top:233.5px;text-align:center;font-family:'Liberation Serif', serif;font-weight:bold;font-size:10.6px;color:#000">Офіцери діючого резерву ГУ КЗЕ</div>
<div class="ab" style="left:19px;top:246px;width:38px;height:15px;display:flex;align-items:center;justify-content:center;text-align:center;font-family:'Liberation Serif', serif;font-size:9.7px;line-height:9.7px;color:#000;font-weight:normal;overflow:hidden;white-space:nowrap"><div style="position:relative;top:1px;">п-к</div></div>
<div class="ab" style="left:58px;top:246px;width:166px;height:15px;display:flex;align-items:center;justify-content:center;text-align:center;font-family:'Liberation Serif', serif;font-size:9.65px;line-height:9.65px;color:#000;font-weight:normal;overflow:hidden;white-space:nowrap"><div style="position:relative;top:1px;">Ткачов Олександр Володимирович</div></div>
<div class="ab" style="left:225px;top:246px;width:57px;height:15px;display:flex;align-items:center;justify-content:center;text-align:center;font-family:'Liberation Serif', serif;font-size:6.2px;line-height:7.8px;color:#000;font-weight:normal;overflow:hidden;white-space:nowrap"><div style="position:relative;top:0px;">Державний<br>ощадний банк</div></div>
<div class="ab" style="left:452px;top:246px;width:63px;height:15px;display:flex;align-items:center;justify-content:center;text-align:center;font-family:'Liberation Serif', serif;font-size:9.5px;line-height:9.5px;color:#000;font-weight:normal;overflow:hidden;white-space:nowrap"><div style="position:relative;top:1.5px;">283-31-39</div></div>
<div class="ab" style="left:516px;top:246px;width:79px;height:15px;display:flex;align-items:center;justify-content:center;text-align:center;font-family:'Liberation Serif', serif;font-size:9.5px;line-height:9.5px;color:#000;font-weight:normal;overflow:hidden;white-space:nowrap"><div style="position:relative;top:1.5px;">067-321-19-37</div></div>
<div class="ab" style="left:596px;top:246px;width:61px;height:15px;display:flex;align-items:center;justify-content:center;text-align:center;font-family:'Liberation Serif', serif;font-size:9.5px;line-height:9.5px;color:#000;font-weight:normal;overflow:hidden;white-space:nowrap"><div style="position:relative;top:1.5px;">22.10.1967</div></div>
<div class="ab" style="left:19px;top:262px;width:38px;height:15px;display:flex;align-items:center;justify-content:center;text-align:center;font-family:'Liberation Serif', serif;font-size:9.7px;line-height:9.7px;color:#000;font-weight:normal;overflow:hidden;white-space:nowrap"><div style="position:relative;top:1px;">к-н</div></div>
<div class="ab" style="left:58px;top:262px;width:166px;height:15px;display:flex;align-items:center;justify-content:center;text-align:center;font-family:'Liberation Serif', serif;font-size:9.65px;line-height:9.65px;color:#000;font-weight:normal;overflow:hidden;white-space:nowrap"><div style="position:relative;top:1px;">Копач Ігор Миколайович</div></div>
<div class="ab" style="left:225px;top:262px;width:57px;height:15px;display:flex;align-items:center;justify-content:center;text-align:center;font-family:'Liberation Serif', serif;font-size:6.2px;line-height:7.8px;color:#000;font-weight:normal;overflow:hidden;white-space:nowrap"><div style="position:relative;top:0px;">НА медичних наук</div></div>
<div class="ab" style="left:516px;top:262px;width:79px;height:15px;display:flex;align-items:center;justify-content:center;text-align:center;font-family:'Liberation Serif', serif;font-size:9.5px;line-height:9.5px;color:#000;font-weight:normal;overflow:hidden;white-space:nowrap"><div style="position:relative;top:1.5px;">067-679-34-25</div></div>
<div class="ab" style="left:596px;top:262px;width:61px;height:15px;display:flex;align-items:center;justify-content:center;text-align:center;font-family:'Liberation Serif', serif;font-size:9.5px;line-height:9.5px;color:#000;font-weight:normal;overflow:hidden;white-space:nowrap"><div style="position:relative;top:1.5px;">06.07.1983</div></div>
<div class="ab" style="left:19px;top:278px;width:38px;height:23px;display:flex;align-items:center;justify-content:center;text-align:center;font-family:'Liberation Serif', serif;font-size:9.7px;line-height:9.7px;color:#000;font-weight:normal;overflow:hidden;white-space:nowrap"><div style="position:relative;top:1px;">п/п-к</div></div>
<div class="ab" style="left:58px;top:278px;width:166px;height:23px;display:flex;align-items:center;justify-content:center;text-align:center;font-family:'Liberation Serif', serif;font-size:9.65px;line-height:9.65px;color:#000;font-weight:normal;overflow:hidden;white-space:nowrap"><div style="position:relative;top:1px;">Орєхов Віктор Олександрович</div></div>
<div class="ab" style="left:225px;top:278px;width:57px;height:23px;display:flex;align-items:center;justify-content:center;text-align:center;font-family:'Liberation Serif', serif;font-size:6.2px;line-height:7.8px;color:#000;font-weight:normal;overflow:hidden;white-space:nowrap"><div style="position:relative;top:0px;">Державний<br>експертний центр<br>МОЗ України</div></div>
<div class="ab" style="left:516px;top:278px;width:79px;height:23px;display:flex;align-items:center;justify-content:center;text-align:center;font-family:'Liberation Serif', serif;font-size:9.5px;line-height:9.5px;color:#000;font-weight:normal;overflow:hidden;white-space:nowrap"><div style="position:relative;top:1.5px;">097-021-77-98</div></div>
<div class="ab" style="left:596px;top:278px;width:61px;height:23px;display:flex;align-items:center;justify-content:center;text-align:center;font-family:'Liberation Serif', serif;font-size:9.5px;line-height:9.5px;color:#000;font-weight:normal;overflow:hidden;white-space:nowrap"><div style="position:relative;top:1.5px;">22.02.1978</div></div>
<div class="ab" style="left:19px;top:302px;width:38px;height:15px;display:flex;align-items:center;justify-content:center;text-align:center;font-family:'Liberation Serif', serif;font-size:9.7px;line-height:9.7px;color:#000;font-weight:normal;overflow:hidden;white-space:nowrap"><div style="position:relative;top:1px;">п-к</div></div>
<div class="ab" style="left:58px;top:302px;width:166px;height:15px;display:flex;align-items:center;justify-content:center;text-align:center;font-family:'Liberation Serif', serif;font-size:9.65px;line-height:9.65px;color:#000;font-weight:normal;overflow:hidden;white-space:nowrap"><div style="position:relative;top:1px;">Швидкий Сергій Вікторович</div></div>
<div class="ab" style="left:225px;top:302px;width:57px;height:15px;display:flex;align-items:center;justify-content:center;text-align:center;font-family:'Liberation Serif', serif;font-size:6.2px;line-height:7.8px;color:#000;font-weight:normal;overflow:hidden;white-space:nowrap"><div style="position:relative;top:0px;">Міністерство<br>аграрної політики</div></div>
<div class="ab" style="left:516px;top:302px;width:79px;height:15px;display:flex;align-items:center;justify-content:center;text-align:center;font-family:'Liberation Serif', serif;font-size:9.5px;line-height:9.5px;color:#000;font-weight:normal;overflow:hidden;white-space:nowrap"><div style="position:relative;top:1.5px;">0+67-410-22-87</div></div>
<div class="ab" style="left:19px;top:318px;width:38px;height:23px;display:flex;align-items:center;justify-content:center;text-align:center;font-family:'Liberation Serif', serif;font-size:9.7px;line-height:9.7px;color:#000;font-weight:normal;overflow:hidden;white-space:nowrap"><div style="position:relative;top:1px;">п/п-к</div></div>
<div class="ab" style="left:58px;top:318px;width:166px;height:23px;display:flex;align-items:center;justify-content:center;text-align:center;font-family:'Liberation Serif', serif;font-size:9.65px;line-height:9.65px;color:#000;font-weight:normal;overflow:hidden;white-space:nowrap"><div style="position:relative;top:1px;">Ластенко Юрій Юрійович</div></div>
<div class="ab" style="left:225px;top:318px;width:57px;height:23px;display:flex;align-items:center;justify-content:center;text-align:center;font-family:'Liberation Serif', serif;font-size:6.2px;line-height:7.8px;color:#000;font-weight:normal;overflow:hidden;white-space:nowrap"><div style="position:relative;top:0px;">ДА з питань науки,<br>інновацій та<br>інформатизації</div></div>
<div class="ab" style="left:516px;top:318px;width:79px;height:23px;display:flex;align-items:center;justify-content:center;text-align:center;font-family:'Liberation Serif', serif;font-size:9.5px;line-height:9.5px;color:#000;font-weight:normal;overflow:hidden;white-space:nowrap"><div style="position:relative;top:1.5px;">067-321-48-00</div></div>
<div class="ab" style="left:596px;top:318px;width:61px;height:23px;display:flex;align-items:center;justify-content:center;text-align:center;font-family:'Liberation Serif', serif;font-size:9.5px;line-height:9.5px;color:#000;font-weight:normal;overflow:hidden;white-space:nowrap"><div style="position:relative;top:1.5px;">09.10.1971</div></div>
<div class="ab" style="left:19px;top:342px;width:38px;height:31px;display:flex;align-items:center;justify-content:center;text-align:center;font-family:'Liberation Serif', serif;font-size:9.7px;line-height:9.7px;color:#000;font-weight:normal;overflow:hidden;white-space:nowrap"><div style="position:relative;top:1px;">п-к</div></div>
<div class="ab" style="left:58px;top:342px;width:166px;height:31px;display:flex;align-items:center;justify-content:center;text-align:center;font-family:'Liberation Serif', serif;font-size:9.65px;line-height:9.65px;color:#000;font-weight:normal;overflow:hidden;white-space:nowrap"><div style="position:relative;top:1px;">Грес Сергій Володимирович</div></div>
<div class="ab" style="left:225px;top:342px;width:57px;height:31px;display:flex;align-items:center;justify-content:center;text-align:center;font-family:'Liberation Serif', serif;font-size:6.2px;line-height:7.8px;color:#000;font-weight:normal;overflow:hidden;white-space:nowrap"><div style="position:relative;top:0px;">Державна<br>ветеринарна<br>та фіто санітарна<br>служба</div></div>
<div class="ab" style="left:516px;top:342px;width:79px;height:31px;display:flex;align-items:center;justify-content:center;text-align:center;font-family:'Liberation Serif', serif;font-size:9.5px;line-height:9.5px;color:#000;font-weight:normal;overflow:hidden;white-space:nowrap"><div style="position:relative;top:1.5px;">067-244-45-65</div></div>
<div class="ab" style="left:596px;top:342px;width:61px;height:31px;display:flex;align-items:center;justify-content:center;text-align:center;font-family:'Liberation Serif', serif;font-size:9.5px;line-height:9.5px;color:#000;font-weight:normal;overflow:hidden;white-space:nowrap"><div style="position:relative;top:1.5px;">05.10.1970</div></div>
<div class="ab" style="left:19px;top:374px;width:38px;height:15px;display:flex;align-items:center;justify-content:center;text-align:center;font-family:'Liberation Serif', serif;font-size:9.7px;line-height:9.7px;color:#000;font-weight:normal;overflow:hidden;white-space:nowrap"><div style="position:relative;top:1px;">п-к</div></div>
<div class="ab" style="left:58px;top:374px;width:166px;height:15px;display:flex;align-items:center;justify-content:center;text-align:center;font-family:'Liberation Serif', serif;font-size:9.65px;line-height:9.65px;color:#000;font-weight:normal;overflow:hidden;white-space:nowrap"><div style="position:relative;top:1px;">Богуцький Юрій Петрович</div></div>
<div class="ab" style="left:225px;top:374px;width:57px;height:15px;display:flex;align-items:center;justify-content:center;text-align:center;font-family:'Liberation Serif', serif;font-size:6.2px;line-height:7.8px;color:#000;font-weight:normal;overflow:hidden;white-space:nowrap"><div style="position:relative;top:0px;">Міністерство освіти<br>та науки</div></div>
<div class="ab" style="left:516px;top:374px;width:79px;height:15px;display:flex;align-items:center;justify-content:center;text-align:center;font-family:'Liberation Serif', serif;font-size:9.5px;line-height:9.5px;color:#000;font-weight:normal;overflow:hidden;white-space:nowrap"><div style="position:relative;top:1.5px;">095-114-79-79</div></div>
<div class="ab" style="left:596px;top:374px;width:61px;height:15px;display:flex;align-items:center;justify-content:center;text-align:center;font-family:'Liberation Serif', serif;font-size:9.5px;line-height:9.5px;color:#000;font-weight:normal;overflow:hidden;white-space:nowrap"><div style="position:relative;top:1.5px;">28.07.1978</div></div>
<div class="ab" style="left:19px;top:390px;width:38px;height:14px;display:flex;align-items:center;justify-content:center;text-align:center;font-family:'Liberation Serif', serif;font-size:9.7px;line-height:9.7px;color:#000;font-weight:normal;overflow:hidden;white-space:nowrap"><div style="position:relative;top:1px;">п-к</div></div>
<div class="ab" style="left:58px;top:390px;width:166px;height:14px;display:flex;align-items:center;justify-content:center;text-align:center;font-family:'Liberation Serif', serif;font-size:9.65px;line-height:9.65px;color:#000;font-weight:normal;overflow:hidden;white-space:nowrap"><div style="position:relative;top:1px;">Сухоносов Олег Володимирович</div></div>
<div class="ab" style="left:225px;top:390px;width:57px;height:14px;display:flex;align-items:center;justify-content:center;text-align:center;font-family:'Liberation Serif', serif;font-size:5.5px;line-height:6.9px;color:#000;font-weight:normal;overflow:hidden;white-space:nowrap"><div style="position:relative;top:0px;">Укренерго</div></div>
<div class="ab" style="left:516px;top:390px;width:79px;height:14px;display:flex;align-items:center;justify-content:center;text-align:center;font-family:'Liberation Serif', serif;font-size:9.5px;line-height:9.5px;color:#000;font-weight:normal;overflow:hidden;white-space:nowrap"><div style="position:relative;top:1.5px;">050-469-50-92</div></div>
<div class="ab" style="left:596px;top:390px;width:61px;height:14px;display:flex;align-items:center;justify-content:center;text-align:center;font-family:'Liberation Serif', serif;font-size:9.5px;line-height:9.5px;color:#000;font-weight:normal;overflow:hidden;white-space:nowrap"><div style="position:relative;top:1.5px;">10.08.1973</div></div>
<div class="ab" style="left:19px;top:405px;width:38px;height:21px;display:flex;align-items:center;justify-content:center;text-align:center;font-family:'Liberation Serif', serif;font-size:9.7px;line-height:9.7px;color:#000;font-weight:normal;overflow:hidden;white-space:nowrap"><div style="position:relative;top:1px;">п/п-к</div></div>
<div class="ab" style="left:58px;top:405px;width:166px;height:21px;display:flex;align-items:center;justify-content:center;text-align:center;font-family:'Liberation Serif', serif;font-size:9.65px;line-height:9.65px;color:#000;font-weight:normal;overflow:hidden;white-space:nowrap"><div style="position:relative;top:1px;">Авраменко Юрій Миколайович</div></div>
<div class="ab" style="left:225px;top:405px;width:57px;height:21px;display:flex;align-items:center;justify-content:center;text-align:center;font-family:'Liberation Serif', serif;font-size:8.3px;line-height:10.4px;color:#000;font-weight:normal;overflow:hidden;white-space:nowrap"><div style="position:relative;top:0px;">Міністерство<br>освіти і науки</div></div>
<div class="ab" style="left:516px;top:405px;width:79px;height:21px;display:flex;align-items:center;justify-content:center;text-align:center;font-family:'Liberation Serif', serif;font-size:9.5px;line-height:9.5px;color:#000;font-weight:normal;overflow:hidden;white-space:nowrap"><div style="position:relative;top:1.5px;">098-246-27-17</div></div>
<div class="ab" style="left:596px;top:405px;width:61px;height:21px;display:flex;align-items:center;justify-content:center;text-align:center;font-family:'Liberation Serif', serif;font-size:9.5px;line-height:9.5px;color:#000;font-weight:normal;overflow:hidden;white-space:nowrap"><div style="position:relative;top:1.5px;">24.08.1976</div></div>
<div class="ab" style="left:19px;top:427px;width:38px;height:14px;display:flex;align-items:center;justify-content:center;text-align:center;font-family:'Liberation Serif', serif;font-size:9.7px;line-height:9.7px;color:#000;font-weight:normal;overflow:hidden;white-space:nowrap"><div style="position:relative;top:1px;">п/п-к</div></div>
<div class="ab" style="left:58px;top:427px;width:166px;height:14px;display:flex;align-items:center;justify-content:center;text-align:center;font-family:'Liberation Serif', serif;font-size:9.65px;line-height:9.65px;color:#000;font-weight:normal;overflow:hidden;white-space:nowrap"><div style="position:relative;top:1px;">Логвин Віталій Вікторович</div></div>
<div class="ab" style="left:225px;top:427px;width:57px;height:14px;display:flex;align-items:center;justify-content:center;text-align:center;font-family:'Liberation Serif', serif;font-size:6.2px;line-height:7.8px;color:#000;font-weight:normal;overflow:hidden;white-space:nowrap"><div style="position:relative;top:0px;">УКРТРАНСГАЗ</div></div>
<div class="ab" style="left:516px;top:427px;width:79px;height:14px;display:flex;align-items:center;justify-content:center;text-align:center;font-family:'Liberation Serif', serif;font-size:9.5px;line-height:9.5px;color:#000;font-weight:normal;overflow:hidden;white-space:nowrap"><div style="position:relative;top:1.5px;">050-353-01-55</div></div>
<div class="ab" style="left:596px;top:427px;width:61px;height:14px;display:flex;align-items:center;justify-content:center;text-align:center;font-family:'Liberation Serif', serif;font-size:9.5px;line-height:9.5px;color:#000;font-weight:normal;overflow:hidden;white-space:nowrap"><div style="position:relative;top:1.5px;">17.09.1976</div></div>
<div class="ab" style="left:19px;top:442px;width:38px;height:13px;display:flex;align-items:center;justify-content:center;text-align:center;font-family:'Liberation Serif', serif;font-size:9.7px;line-height:9.7px;color:#000;font-weight:normal;overflow:hidden;white-space:nowrap"><div style="position:relative;top:1px;">п/п-к</div></div>
<div class="ab" style="left:58px;top:442px;width:166px;height:13px;display:flex;align-items:center;justify-content:center;text-align:center;font-family:'Liberation Serif', serif;font-size:9.65px;line-height:9.65px;color:#000;font-weight:normal;overflow:hidden;white-space:nowrap"><div style="position:relative;top:1px;">Шевчук Ігор Леонідович</div></div>
<div class="ab" style="left:225px;top:442px;width:57px;height:13px;display:flex;align-items:center;justify-content:center;text-align:center;font-family:'Liberation Serif', serif;font-size:6.2px;line-height:7.8px;color:#000;font-weight:normal;overflow:hidden;white-space:nowrap"><div style="position:relative;top:0px;">УКРГІДРОЕНЕРГО</div></div>
<div class="ab" style="left:516px;top:442px;width:79px;height:13px;display:flex;align-items:center;justify-content:center;text-align:center;font-family:'Liberation Serif', serif;font-size:9.5px;line-height:9.5px;color:#000;font-weight:normal;overflow:hidden;white-space:nowrap"><div style="position:relative;top:1.5px;">067-321-42-98</div></div>
<div class="ab" style="left:596px;top:442px;width:61px;height:13px;display:flex;align-items:center;justify-content:center;text-align:center;font-family:'Liberation Serif', serif;font-size:9.5px;line-height:9.5px;color:#000;font-weight:normal;overflow:hidden;white-space:nowrap"><div style="position:relative;top:1.5px;">24.05.1977</div></div>
<div class="ab" style="left:19px;top:456px;width:38px;height:15px;display:flex;align-items:center;justify-content:center;text-align:center;font-family:'Liberation Serif', serif;font-size:9.7px;line-height:9.7px;color:#000;font-weight:normal;overflow:hidden;white-space:nowrap"><div style="position:relative;top:1px;">к-н</div></div>
<div class="ab" style="left:58px;top:456px;width:166px;height:15px;display:flex;align-items:center;justify-content:center;text-align:center;font-family:'Liberation Serif', serif;font-size:9.65px;line-height:9.65px;color:#000;font-weight:normal;overflow:hidden;white-space:nowrap"><div style="position:relative;top:1px;">Назарук Віктор Вікторович</div></div>
<div class="ab" style="left:225px;top:456px;width:57px;height:15px;display:flex;align-items:center;justify-content:center;text-align:center;font-family:'Liberation Serif', serif;font-size:6.2px;line-height:7.8px;color:#000;font-weight:normal;overflow:hidden;white-space:nowrap"><div style="position:relative;top:0px;">ДА лісових ресурсів</div></div>
<div class="ab" style="left:516px;top:456px;width:79px;height:15px;display:flex;align-items:center;justify-content:center;text-align:center;font-family:'Liberation Serif', serif;font-size:9.5px;line-height:9.5px;color:#000;font-weight:normal;overflow:hidden;white-space:nowrap"><div style="position:relative;top:1.5px;">098-661-23-56</div></div>
<div class="ab" style="left:596px;top:456px;width:61px;height:15px;display:flex;align-items:center;justify-content:center;text-align:center;font-family:'Liberation Serif', serif;font-size:9.5px;line-height:9.5px;color:#000;font-weight:normal;overflow:hidden;white-space:nowrap"><div style="position:relative;top:1.5px;">21.04.1987</div></div>
<div class="ab" style="left:19px;top:472px;width:38px;height:15px;display:flex;align-items:center;justify-content:center;text-align:center;font-family:'Liberation Serif', serif;font-size:9.7px;line-height:9.7px;color:#000;font-weight:normal;overflow:hidden;white-space:nowrap"><div style="position:relative;top:1px;">п/п-к</div></div>
<div class="ab" style="left:58px;top:472px;width:166px;height:15px;display:flex;align-items:center;justify-content:center;text-align:center;font-family:'Liberation Serif', serif;font-size:9.65px;line-height:9.65px;color:#000;font-weight:normal;overflow:hidden;white-space:nowrap"><div style="position:relative;top:1px;">Мережко Ярослав Вікторович</div></div>
<div class="ab" style="left:225px;top:472px;width:57px;height:15px;display:flex;align-items:center;justify-content:center;text-align:center;font-family:'Liberation Serif', serif;font-size:8px;line-height:10.0px;color:#000;font-weight:normal;overflow:hidden;white-space:nowrap"><div style="position:relative;top:0px;">Ядерне паливо</div></div>
<div class="ab" style="left:452px;top:472px;width:63px;height:15px;display:flex;align-items:center;justify-content:center;text-align:center;font-family:'Liberation Serif', serif;font-size:9.5px;line-height:9.5px;color:#000;font-weight:normal;overflow:hidden;white-space:nowrap"><div style="position:relative;top:1.5px;">569-43-47</div></div>
<div class="ab" style="left:516px;top:472px;width:79px;height:15px;display:flex;align-items:center;justify-content:center;text-align:center;font-family:'Liberation Serif', serif;font-size:9.5px;line-height:9.5px;color:#000;font-weight:normal;overflow:hidden;white-space:nowrap"><div style="position:relative;top:1.5px;">067-244-92-07</div></div>
<div class="ab" style="left:596px;top:472px;width:61px;height:15px;display:flex;align-items:center;justify-content:center;text-align:center;font-family:'Liberation Serif', serif;font-size:9.5px;line-height:9.5px;color:#000;font-weight:normal;overflow:hidden;white-space:nowrap"><div style="position:relative;top:1.5px;">30.12.1979</div></div>
<div class="ab" style="left:19px;top:488px;width:38px;height:13px;display:flex;align-items:center;justify-content:center;text-align:center;font-family:'Liberation Serif', serif;font-size:9.7px;line-height:9.7px;color:#000;font-weight:normal;overflow:hidden;white-space:nowrap"><div style="position:relative;top:1px;">к-н</div></div>
<div class="ab" style="left:58px;top:488px;width:166px;height:13px;display:flex;align-items:center;justify-content:center;text-align:center;font-family:'Liberation Serif', serif;font-size:9.65px;line-height:9.65px;color:#000;font-weight:normal;overflow:hidden;white-space:nowrap"><div style="position:relative;top:1px;">Пономаренко Тарас Григорович</div></div>
<div class="ab" style="left:225px;top:488px;width:57px;height:13px;display:flex;align-items:center;justify-content:center;text-align:center;font-family:'Liberation Serif', serif;font-size:5.8px;line-height:7.2px;color:#000;font-weight:normal;overflow:hidden;white-space:nowrap"><div style="position:relative;top:0px;">НАН України</div></div>
<div class="ab" style="left:19px;top:502px;width:38px;height:15px;display:flex;align-items:center;justify-content:center;text-align:center;font-family:'Liberation Serif', serif;font-size:9.7px;line-height:9.7px;color:#000;font-weight:normal;overflow:hidden;white-space:nowrap"><div style="position:relative;top:1px;">п-к</div></div>
<div class="ab" style="left:58px;top:502px;width:166px;height:15px;display:flex;align-items:center;justify-content:center;text-align:center;font-family:'Liberation Serif', serif;font-size:9.65px;line-height:9.65px;color:#000;font-weight:normal;overflow:hidden;white-space:nowrap"><div style="position:relative;top:1px;">Безрукий Борис Васильович</div></div>
<div class="ab" style="left:225px;top:502px;width:57px;height:15px;display:flex;align-items:center;justify-content:center;text-align:center;font-family:'Liberation Serif', serif;font-size:5.8px;line-height:7.2px;color:#000;font-weight:normal;overflow:hidden;white-space:nowrap"><div style="position:relative;top:0px;">Енергоринок</div></div>
<div class="ab" style="left:516px;top:502px;width:79px;height:15px;display:flex;align-items:center;justify-content:center;text-align:center;font-family:'Liberation Serif', serif;font-size:9.5px;line-height:9.5px;color:#000;font-weight:normal;overflow:hidden;white-space:nowrap"><div style="position:relative;top:1.5px;">066-729-12-19</div></div>
<div class="ab" style="left:596px;top:502px;width:61px;height:15px;display:flex;align-items:center;justify-content:center;text-align:center;font-family:'Liberation Serif', serif;font-size:9.5px;line-height:9.5px;color:#000;font-weight:normal;overflow:hidden;white-space:nowrap"><div style="position:relative;top:1.5px;">01.09.1970</div></div>
<div class="ab" style="left:19px;top:518px;width:38px;height:14px;display:flex;align-items:center;justify-content:center;text-align:center;font-family:'Liberation Serif', serif;font-size:9.7px;line-height:9.7px;color:#000;font-weight:normal;overflow:hidden;white-space:nowrap"><div style="position:relative;top:1px;">п/п-к</div></div>
<div class="ab" style="left:58px;top:518px;width:166px;height:14px;display:flex;align-items:center;justify-content:center;text-align:center;font-family:'Liberation Serif', serif;font-size:9.65px;line-height:9.65px;color:#000;font-weight:normal;overflow:hidden;white-space:nowrap"><div style="position:relative;top:1px;">Терміта Андрій Ігорович</div></div>
<div class="ab" style="left:225px;top:518px;width:57px;height:14px;display:flex;align-items:center;justify-content:center;text-align:center;font-family:'Liberation Serif', serif;font-size:5.8px;line-height:7.2px;color:#000;font-weight:normal;overflow:hidden;white-space:nowrap"><div style="position:relative;top:0px;">Укрпошта</div></div>
<div class="ab" style="left:516px;top:518px;width:79px;height:14px;display:flex;align-items:center;justify-content:center;text-align:center;font-family:'Liberation Serif', serif;font-size:9.5px;line-height:9.5px;color:#000;font-weight:normal;overflow:hidden;white-space:nowrap"><div style="position:relative;top:1.5px;">050-471-01-07</div></div>
<div class="ab" style="left:19px;top:533px;width:38px;height:15px;display:flex;align-items:center;justify-content:center;text-align:center;font-family:'Liberation Serif', serif;font-size:9.7px;line-height:9.7px;color:#000;font-weight:normal;overflow:hidden;white-space:nowrap"><div style="position:relative;top:1px;">п-к</div></div>
<div class="ab" style="left:58px;top:533px;width:166px;height:15px;display:flex;align-items:center;justify-content:center;text-align:center;font-family:'Liberation Serif', serif;font-size:9.65px;line-height:9.65px;color:#000;font-weight:normal;overflow:hidden;white-space:nowrap"><div style="position:relative;top:1px;">Похіл Володимир Миколайович</div></div>
<div class="ab" style="left:225px;top:533px;width:57px;height:15px;display:flex;align-items:center;justify-content:center;text-align:center;font-family:'Liberation Serif', serif;font-size:6.2px;line-height:7.8px;color:#000;font-weight:normal;overflow:hidden;white-space:nowrap"><div style="position:relative;top:0px;">Державна авіаційна<br>служба</div></div>
<div class="ab" style="left:452px;top:533px;width:63px;height:15px;display:flex;align-items:center;justify-content:center;text-align:center;font-family:'Liberation Serif', serif;font-size:9.5px;line-height:9.5px;color:#000;font-weight:normal;overflow:hidden;white-space:nowrap"><div style="position:relative;top:1.5px;">461-53-98</div></div>
<div class="ab" style="left:516px;top:533px;width:79px;height:15px;display:flex;align-items:center;justify-content:center;text-align:center;font-family:'Liberation Serif', serif;font-size:9.5px;line-height:9.5px;color:#000;font-weight:normal;overflow:hidden;white-space:nowrap"><div style="position:relative;top:1.5px;">050-462-56-96</div></div>
<div class="ab" style="left:596px;top:533px;width:61px;height:15px;display:flex;align-items:center;justify-content:center;text-align:center;font-family:'Liberation Serif', serif;font-size:9.5px;line-height:9.5px;color:#000;font-weight:normal;overflow:hidden;white-space:nowrap"><div style="position:relative;top:1.5px;">14.01.1964</div></div>
<div class="ab" style="left:19px;top:549px;width:38px;height:15px;display:flex;align-items:center;justify-content:center;text-align:center;font-family:'Liberation Serif', serif;font-size:9.7px;line-height:9.7px;color:#000;font-weight:normal;overflow:hidden;white-space:nowrap"><div style="position:relative;top:1px;">п/п-к</div></div>
<div class="ab" style="left:58px;top:549px;width:166px;height:15px;display:flex;align-items:center;justify-content:center;text-align:center;font-family:'Liberation Serif', serif;font-size:9.65px;line-height:9.65px;color:#000;font-weight:normal;overflow:hidden;white-space:nowrap"><div style="position:relative;top:1px;">Матковський Денис Юрійович</div></div>
<div class="ab" style="left:225px;top:549px;width:57px;height:15px;display:flex;align-items:center;justify-content:center;text-align:center;font-family:'Liberation Serif', serif;font-size:6.2px;line-height:7.8px;color:#000;font-weight:normal;overflow:hidden;white-space:nowrap"><div style="position:relative;top:0px;">Міністерство<br>інфраструктури</div></div>
<div class="ab" style="left:19px;top:565px;width:38px;height:23px;display:flex;align-items:center;justify-content:center;text-align:center;font-family:'Liberation Serif', serif;font-size:9.7px;line-height:9.7px;color:#000;font-weight:normal;overflow:hidden;white-space:nowrap"><div style="position:relative;top:1px;">п/п-к</div></div>
<div class="ab" style="left:58px;top:565px;width:166px;height:23px;display:flex;align-items:center;justify-content:center;text-align:center;font-family:'Liberation Serif', serif;font-size:9.65px;line-height:9.65px;color:#000;font-weight:normal;overflow:hidden;white-space:nowrap"><div style="position:relative;top:1px;">Желейко Сергій Сергійович</div></div>
<div class="ab" style="left:225px;top:565px;width:57px;height:23px;display:flex;align-items:center;justify-content:center;text-align:center;font-family:'Liberation Serif', serif;font-size:6.2px;line-height:7.8px;color:#000;font-weight:normal;overflow:hidden;white-space:nowrap"><div style="position:relative;top:0px;">"Українське<br>Дунайське<br>пароплавство"</div></div>
<div class="ab" style="left:516px;top:565px;width:79px;height:23px;display:flex;align-items:center;justify-content:center;text-align:center;font-family:'Liberation Serif', serif;font-size:9.5px;line-height:9.5px;color:#000;font-weight:normal;overflow:hidden;white-space:nowrap"><div style="position:relative;top:1.5px;">067-511-08-54</div></div>
<div class="ab" style="left:596px;top:565px;width:61px;height:23px;display:flex;align-items:center;justify-content:center;text-align:center;font-family:'Liberation Serif', serif;font-size:9.5px;line-height:9.5px;color:#000;font-weight:normal;overflow:hidden;white-space:nowrap"><div style="position:relative;top:1.5px;">12.08.1976</div></div>
<div class="ab" style="left:19px;top:589px;width:38px;height:15px;display:flex;align-items:center;justify-content:center;text-align:center;font-family:'Liberation Serif', serif;font-size:9.7px;line-height:9.7px;color:#000;font-weight:normal;overflow:hidden;white-space:nowrap"><div style="position:relative;top:1px;">к-н</div></div>
<div class="ab" style="left:58px;top:589px;width:166px;height:15px;display:flex;align-items:center;justify-content:center;text-align:center;font-family:'Liberation Serif', serif;font-size:9.65px;line-height:9.65px;color:#000;font-weight:normal;overflow:hidden;white-space:nowrap"><div style="position:relative;top:1px;">Пригаровський Кирило Вікторович</div></div>
<div class="ab" style="left:225px;top:589px;width:57px;height:15px;display:flex;align-items:center;justify-content:center;text-align:center;font-family:'Liberation Serif', serif;font-size:6.2px;line-height:7.8px;color:#000;font-weight:normal;overflow:hidden;white-space:nowrap"><div style="position:relative;top:0px;">Морські порти<br>України</div></div>
<div class="ab" style="left:19px;top:605px;width:38px;height:14px;display:flex;align-items:center;justify-content:center;text-align:center;font-family:'Liberation Serif', serif;font-size:9.7px;line-height:9.7px;color:#000;font-weight:normal;overflow:hidden;white-space:nowrap"><div style="position:relative;top:1px;">п-к</div></div>
<div class="ab" style="left:58px;top:605px;width:166px;height:14px;display:flex;align-items:center;justify-content:center;text-align:center;font-family:'Liberation Serif', serif;font-size:9.65px;line-height:9.65px;color:#000;font-weight:normal;overflow:hidden;white-space:nowrap"><div style="position:relative;top:1px;">Швед Ігор Петрович</div></div>
<div class="ab" style="left:225px;top:605px;width:57px;height:14px;display:flex;align-items:center;justify-content:center;text-align:center;font-family:'Liberation Serif', serif;font-size:5.8px;line-height:7.2px;color:#000;font-weight:normal;overflow:hidden;white-space:nowrap"><div style="position:relative;top:0px;">Укрзалізниця</div></div>
<div class="ab" style="left:452px;top:605px;width:63px;height:14px;display:flex;align-items:center;justify-content:center;text-align:center;font-family:'Liberation Serif', serif;font-size:9.5px;line-height:9.5px;color:#000;font-weight:normal;overflow:hidden;white-space:nowrap"><div style="position:relative;top:1.5px;">432-24-26</div></div>
<div class="ab" style="left:516px;top:605px;width:79px;height:14px;display:flex;align-items:center;justify-content:center;text-align:center;font-family:'Liberation Serif', serif;font-size:9.5px;line-height:9.5px;color:#000;font-weight:normal;overflow:hidden;white-space:nowrap"><div style="position:relative;top:1.5px;">050-381-15-63</div></div>
<div class="ab" style="left:596px;top:605px;width:61px;height:14px;display:flex;align-items:center;justify-content:center;text-align:center;font-family:'Liberation Serif', serif;font-size:9.5px;line-height:9.5px;color:#000;font-weight:normal;overflow:hidden;white-space:nowrap"><div style="position:relative;top:1.5px;">08.01.1975</div></div>
<div class="ab" style="left:19px;top:620px;width:38px;height:15px;display:flex;align-items:center;justify-content:center;text-align:center;font-family:'Liberation Serif', serif;font-size:9.7px;line-height:9.7px;color:#000;font-weight:normal;overflow:hidden;white-space:nowrap"><div style="position:relative;top:1px;">п-к</div></div>
<div class="ab" style="left:58px;top:620px;width:166px;height:15px;display:flex;align-items:center;justify-content:center;text-align:center;font-family:'Liberation Serif', serif;font-size:9.65px;line-height:9.65px;color:#000;font-weight:normal;overflow:hidden;white-space:nowrap"><div style="position:relative;top:1px;">Зінченко Андрій Анатолійович</div></div>
<div class="ab" style="left:225px;top:620px;width:57px;height:15px;display:flex;align-items:center;justify-content:center;text-align:center;font-family:'Liberation Serif', serif;font-size:6.2px;line-height:7.8px;color:#000;font-weight:normal;overflow:hidden;white-space:nowrap"><div style="position:relative;top:0px;">МА Бориспіль<br>Украерорух</div></div>
<div class="ab" style="left:452px;top:620px;width:63px;height:15px;display:flex;align-items:center;justify-content:center;text-align:center;font-family:'Liberation Serif', serif;font-size:9.5px;line-height:9.5px;color:#000;font-weight:normal;overflow:hidden;white-space:nowrap"><div style="position:relative;top:1.5px;">247-47-27</div></div>
<div class="ab" style="left:516px;top:620px;width:79px;height:15px;display:flex;align-items:center;justify-content:center;text-align:center;font-family:'Liberation Serif', serif;font-size:9.5px;line-height:9.5px;color:#000;font-weight:normal;overflow:hidden;white-space:nowrap"><div style="position:relative;top:1.5px;">067-567-44-02</div></div>
<div class="ab" style="left:596px;top:620px;width:61px;height:15px;display:flex;align-items:center;justify-content:center;text-align:center;font-family:'Liberation Serif', serif;font-size:9.5px;line-height:9.5px;color:#000;font-weight:normal;overflow:hidden;white-space:nowrap"><div style="position:relative;top:1.5px;">24.07.1974</div></div>
<div class="ab" style="left:225px;top:636px;width:57px;height:15px;display:flex;align-items:center;justify-content:center;text-align:center;font-family:'Liberation Serif', serif;font-size:6.2px;line-height:7.8px;color:#000;font-weight:normal;overflow:hidden;white-space:nowrap"><div style="position:relative;top:0px;">ДП Укрводшлях</div></div>
<svg class="ab" style="left:0;top:0" width="747" height="680"><path d="M22 469.8 Q 12 470.5 11 476 L 10.8 482 Q 11.2 487 19 487.3 L 380 488.3 L 648 486.6 Q 654.6 486.4 655 482 L 655.3 473 Q 655.3 469.2 650 469 L 600 468.2 L 70 467.8 Q 35 468.2 22 469.8 Z" fill="none" stroke="#E01820" stroke-width="3"/></svg>
<div class="ab" style="left:0;top:659px;width:747px;height:21px;background:#E6E6E6;border-top:1px solid #C6C6C6"></div>
<svg class="ab" style="left:16px;top:664px" width="30" height="9"><path d="M5 1 L1.5 4.5 L5 8" fill="none" stroke="#BDBDBD" stroke-width="1.2"/><path d="M21 1 L24.5 4.5 L21 8" fill="none" stroke="#BDBDBD" stroke-width="1.2"/></svg>
<div class="ab" style="left:67px;top:659px;width:43px;height:17px;background:#fff;box-shadow:1px 0 1px #BBB"></div>
<div class="ab" style="left:67px;top:674px;width:43px;height:2px;background:#217346"></div>
<div class="t" style="left:67px;width:43px;text-align:center;top:664px;font-size:8.5px;font-weight:bold;color:#217346">ГУ КЗЕ</div>
<svg class="ab" style="left:130px;top:663px" width="13" height="13"><circle cx="6.5" cy="6.5" r="5.5" fill="none" stroke="#777" stroke-width="1"/><path d="M6.5 3.5 V9.5 M3.5 6.5 H9.5" stroke="#777" stroke-width="1"/></svg>
</body></html>
